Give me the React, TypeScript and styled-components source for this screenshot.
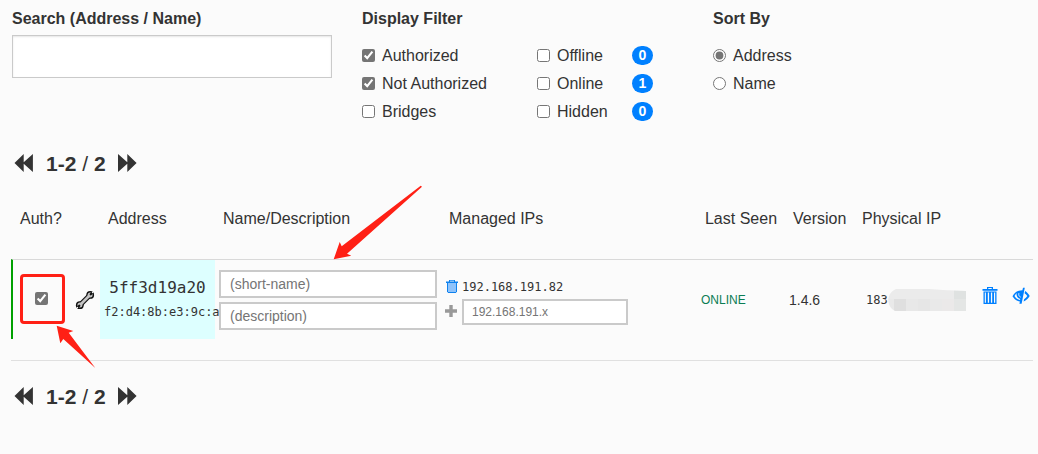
import React from "react";
import styled, { createGlobalStyle } from "styled-components";

const GlobalStyle = createGlobalStyle`
  *, *::before, *::after { box-sizing: border-box; }
  body {
    margin: 0;
    background: #fbfbfb;
    color: #333;
    font: 16px/28px "Liberation Sans", Arial, sans-serif;
  }
`;

const Page = styled.main`
  padding: 5px 5px 16px 11px;
`;

const Controls = styled.form`
  display: grid;
  grid-template-columns: 351fr 351fr 320fr;
  height: 123px;
`;

const Group = styled.fieldset`
  border: 0;
  margin: 0;
  padding: 0;
  min-width: 0;
`;

const Heading = styled.legend`
  padding: 0;
  font-weight: bold;
  margin-bottom: 9px;
`;

const SearchBox = styled.div`
  display: flex;
  flex-direction: column;
  padding: 0 30px 0 1px;
`;

const SearchLabel = styled.label`
  font-weight: bold;
  margin-bottom: 2px;
`;

const SearchInput = styled.input`
  width: 100%;
  height: 43px;
  padding: 8px;
  border: 1px solid #cacaca;
  background: #fff;
  box-shadow: inset 0 1px 2px rgba(10, 10, 10, 0.1);
  font: inherit;
`;

const FilterGrid = styled.div`
  display: grid;
  grid-template-columns: 175px 95px auto;
  grid-auto-rows: 28px;
  align-items: center;
`;

const Choice = styled.label`
  display: flex;
  align-items: center;
  gap: 7px;
`;

const Tick = styled.input`
  width: 13px;
  height: 13px;
  margin: 0 0 1px;
  accent-color: #757575;
`;

const Badge = styled.span`
  justify-self: start;
  width: 21px;
  height: 19px;
  margin-bottom: 2px;
  border-radius: 10px;
  background: #0080ff;
  color: #fff;
  font-size: 14px;
  font-weight: bold;
  line-height: 19px;
  text-align: center;
`;

const PagerBar = styled.nav`
  display: flex;
  align-items: center;
  gap: 12px;
  height: 28px;
  margin: 22px 3px 0;
  font-size: 21px;
`;

const IconButton = styled.button<{ $middle?: boolean }>`
  display: inline-flex;
  vertical-align: ${(p) => (p.$middle ? "middle" : "baseline")};
  padding: 0;
  border: 0;
  background: none;
  color: ${(p) => p.color ?? "inherit"};
  cursor: pointer;

  svg {
    display: block;
    fill: currentColor;
  }
`;

const TableWrap = styled.section`
  position: relative;
  padding-bottom: 21px;
  border-bottom: 1px solid #e0e0e0;
`;

const Members = styled.table`
  width: 100%;
  table-layout: fixed;
  border-spacing: 0;
`;

const HeadCell = styled.th`
  height: 81px;
  padding: 0 8px;
  font-weight: normal;
  text-align: left;
  white-space: nowrap;

  &:first-child { padding-left: 9px; }
`;

const Cell = styled.td<{ $pad?: number }>`
  height: 80px;
  padding: 0 ${(p) => p.$pad ?? 4}px;
  border-top: 1px solid #d9d9d9;
  vertical-align: middle;
`;

const AuthCell = styled(Cell)`
  border-left: 2px solid #00a000;
  padding: 0 7px 2px;
`;

const AuthMark = styled.div`
  display: flex;
  align-items: center;
  justify-content: center;
  width: 45px;
  height: 50px;
  padding-right: 2px;
  border: 3px solid #ff2015;
  border-radius: 4px;
`;

const AddressCell = styled(Cell)`
  background: #dff;
  font-family: "DejaVu Sans Mono", monospace;
  line-height: 25px;
  text-align: center;
`;

const Mac = styled.div`
  font-size: 12px;
  text-align: left;
  white-space: nowrap;
`;

const Fields = styled.div`
  display: grid;
  gap: 4px;
`;

const TextField = styled.input<{ $small?: boolean }>`
  position: relative;
  width: ${(p) => (p.$small ? "166px" : "218px")};
  height: ${(p) => (p.$small ? "26px" : "28px")};
  padding: 0 ${(p) => (p.$small ? 8 : 9)}px;
  border: 2px solid #cacaca;
  background: #fff;
  font: ${(p) => (p.$small ? "12px" : "14px")} "Liberation Sans", Arial, sans-serif;

  &::placeholder { color: #757575; }
`;

const IpLine = styled.div`
  display: grid;
  grid-template-columns: 17px auto;
  align-items: center;
  justify-content: start;
  min-height: 24px;
  line-height: 24px;
`;

const Mono = styled.span`
  font-family: "DejaVu Sans Mono", monospace;
  font-size: 12px;
`;

const Status = styled.span`
  color: #0b7d54;
  font-size: 12px;
`;

const Version = styled.span`
  font-size: 14px;
`;

const PhysicalIp = styled.div`
  display: flex;
  align-items: center;

  svg { flex: none; }
`;

const Arrows = styled.svg`
  position: absolute;
  top: 0;
  left: 0;
  fill: #ff2015;
  pointer-events: none;
`;

function Pager() {
  return (
    <PagerBar aria-label="Pages">
      <IconButton type="button" aria-label="Previous page">
        <svg width="20" height="20" viewBox="0 0 20 20">
          <path d="M.5 9 9.700 0v8.200L18.900 0v18l-9.200-8.200V18z" />
        </svg>
      </IconButton>
      <span><b>1-2</b> / <b>2</b></span>
      <IconButton type="button" aria-label="Next page">
        <svg width="20" height="20" viewBox="0 0 20 20">
          <path d="M18.600 9 9.300 0v8.200L0 0v18l9.300-8.200V18z" />
        </svg>
      </IconButton>
    </PagerBar>
  );
}

function Trash() {
  return (
    <svg width="16" height="18" viewBox="0 0 16 18">
      <path d="M5 0h6v2h4.500v1.700H.5V2H5zm1.300 1v1h3.400V1zM1.500 4.600h13V17h-13zm1.300 1v10.200h1.100V5.600zm3 0v10.200h1.300V5.600zm3.100 0v10.200h1.300V5.600zm3.100 0v10.200h1.200V5.600z" fillRule="evenodd" />
    </svg>
  );
}

function SmallTrash() {
  return (
    <svg width="14" height="14" viewBox="0 0 14 14">
      <path d="M2.500 3h9v10h-9z" fill="#8fc3fb" />
      <path d="M4 0h6v1.500h3V3H1V1.500h3zm1 .8v.7h4V.8zM2 3h1v10H2zm9 0h1v10h-1zM2 12h10v1H2z" fillRule="evenodd" />
    </svg>
  );
}

function Plus() {
  return (
    <svg width="12" height="14" viewBox="0 0 12 14">
      <path d="M4.300 0h3.400v4.300H12v3.400H7.700V12H4.300V7.700H0V4.300h4.300z" />
    </svg>
  );
}

function HiddenEye() {
  return (
    <svg width="18" height="18" viewBox="0 0 18 18">
      <path d="M11 .8h1.800L9.600 16.800H7.400l.5-2.300C4.600 13.900 2.200 12.100.5 9.200 2.700 5.500 6 3.200 10.400 3.300z" />
      <path d="M4.600 5.900C3.800 6.700 3.100 7.900 2.500 9.100c1.200 2 3 3.400 5.500 3.800l.2-.9C5.600 11.300 4.100 8.800 4.600 5.900z" fill="#fbfbfb" />
      <path d="M6.900 6.200c-.5 1.700.1 3.200 1.800 4" fill="none" stroke="#fbfbfb" strokeWidth=".9" />
      <path d="M13.100 4.100c2 1.200 3.500 2.900 4.600 5-1.400 2.500-3.500 4.400-6.100 5.300l.5-2.200c1.300-.7 2.400-1.700 3.200-3.100-.7-1.200-1.600-2.200-2.700-2.900z" />
    </svg>
  );
}

function Wrench() {
  return (
    <svg width="20" height="20" viewBox="0 0 20 20" strokeLinecap="round">
      <circle cx="4.800" cy="15.200" r="3.900" fill="#111" />
      <circle cx="15.200" cy="4.900" r="3.900" fill="#111" />
      <path d="M5.500 14.500 14.500 5.500" stroke="#111" strokeWidth="5" />
      <circle cx="4.900" cy="15" r="2.500" fill="#c4c4c4" />
      <circle cx="15.100" cy="5" r="2.500" fill="#c4c4c4" />
      <path d="M5.500 14.500 14.500 5.500" stroke="#c4c4c4" strokeWidth="2.700" />
      <path d="M4.300 15.700 3 17M15.700 4.300 17 3" stroke="#111" strokeWidth="2.200" />
      <path d="M2.600 17.400 1.600 18.400M17.400 2.600 18.400 1.600" stroke="#fbfbfb" strokeWidth="1.200" />
    </svg>
  );
}

const tiles = ["#e9e9e9", "#dfdfdf", "#e8e8e8", "#e6e6e6", "#e9e9e9", "#ebe9e9", "#e4e6e5"];

function Mosaic() {
  return (
    <svg width="78" height="22" viewBox="0 0 78 22" aria-hidden="true">
      <clipPath id="mask">
        <path d="M8 0h33l14 1 23 1v20H7C-2 18-2 4 8 0z" />
      </clipPath>
      <g clipPath="url(#mask)">
        {tiles.map((fill, i) => (
          <g key={i}>
            <rect x={i * 12 - 6} width="12" height="11" fill={i === 6 ? "#dfe2e1" : "#ebebeb"} />
            <rect x={i * 12 - 6} y="10" width="12" height="12" fill={fill} />
          </g>
        ))}
      </g>
    </svg>
  );
}

const filters = [
  { left: "Authorized", on: true, right: "Offline", count: 0 },
  { left: "Not Authorized", on: true, right: "Online", count: 1 },
  { left: "Bridges", on: false, right: "Hidden", count: 0 },
];

const widths = [61, 28, 115, 226, undefined, 88, 69, 119, 32, 28];

export default function App() {
  return (
    <>
      <GlobalStyle />
      <Page>
        <Controls>
          <SearchBox>
            <SearchLabel htmlFor="search">Search (Address / Name)</SearchLabel>
            <SearchInput id="search" type="text" />
          </SearchBox>
          <Group>
            <Heading>Display Filter</Heading>
            <FilterGrid>
              {filters.map((f) => (
                <React.Fragment key={f.left}>
                  <Choice><Tick type="checkbox" defaultChecked={f.on} />{f.left}</Choice>
                  <Choice><Tick type="checkbox" />{f.right}</Choice>
                  <Badge>{f.count}</Badge>
                </React.Fragment>
              ))}
            </FilterGrid>
          </Group>
          <Group>
            <Heading>Sort By</Heading>
            <Choice><Tick type="radio" name="sort" defaultChecked />Address</Choice>
            <Choice><Tick type="radio" name="sort" />Name</Choice>
          </Group>
        </Controls>

        <Pager />

        <TableWrap>
          <Members>
            <colgroup>
              {widths.map((w, i) => <col key={i} width={w} />)}
            </colgroup>
            <thead>
              <tr>
                <HeadCell colSpan={2}>Auth?</HeadCell>
                <HeadCell>Address</HeadCell>
                <HeadCell>Name/Description</HeadCell>
                <HeadCell>Managed IPs</HeadCell>
                <HeadCell>Last Seen</HeadCell>
                <HeadCell>Version</HeadCell>
                <HeadCell colSpan={3}>Physical IP</HeadCell>
              </tr>
            </thead>
            <tbody>
              <tr>
                <AuthCell>
                  <AuthMark><Tick type="checkbox" defaultChecked aria-label="Authorized member" /></AuthMark>
                </AuthCell>
                <Cell $pad={3}>
                  <IconButton $middle type="button" aria-label="Settings"><Wrench /></IconButton>
                </Cell>
                <AddressCell>
                  <div>5ff3d19a20</div>
                  <Mac>f2:d4:8b:e3:9c:a</Mac>
                </AddressCell>
                <Cell>
                  <Fields>
                    <TextField type="text" placeholder="(short-name)" aria-label="Short name" />
                    <TextField type="text" placeholder="(description)" aria-label="Description" />
                  </Fields>
                </Cell>
                <Cell>
                  <IpLine>
                    <IconButton type="button" color="#0f82ee" aria-label="Remove IP"><SmallTrash /></IconButton>
                    <Mono>192.168.191.82</Mono>
                  </IpLine>
                  <IpLine>
                    <IconButton type="button" color="#999" aria-label="Add IP"><Plus /></IconButton>
                    <TextField $small type="text" placeholder="192.168.191.x" aria-label="New IP" />
                  </IpLine>
                </Cell>
                <Cell><Status>ONLINE</Status></Cell>
                <Cell><Version>1.4.6</Version></Cell>
                <Cell $pad={12}>
                  <PhysicalIp><Mono>183</Mono><Mosaic /></PhysicalIp>
                </Cell>
                <Cell $pad={9}>
                  <IconButton type="button" color="#0080ff" aria-label="Delete member"><Trash /></IconButton>
                </Cell>
                <Cell $pad={7}>
                  <IconButton type="button" color="#0080ff" aria-label="Hide member"><HiddenEye /></IconButton>
                </Cell>
              </tr>
            </tbody>
          </Members>
          <Arrows width="420" height="192" viewBox="11 178 420 192" aria-hidden="true">
            <path d="M56.700 325.700 73.300 331l-4.600 1.700L95.300 368l-32-29-3 4.300z" />
            <path d="M333.700 259.300l6-17.300 2 4.300 79-60.600 1.300 1-75 67 4.300 2z" />
          </Arrows>
        </TableWrap>

        <Pager />
      </Page>
    </>
  );
}
